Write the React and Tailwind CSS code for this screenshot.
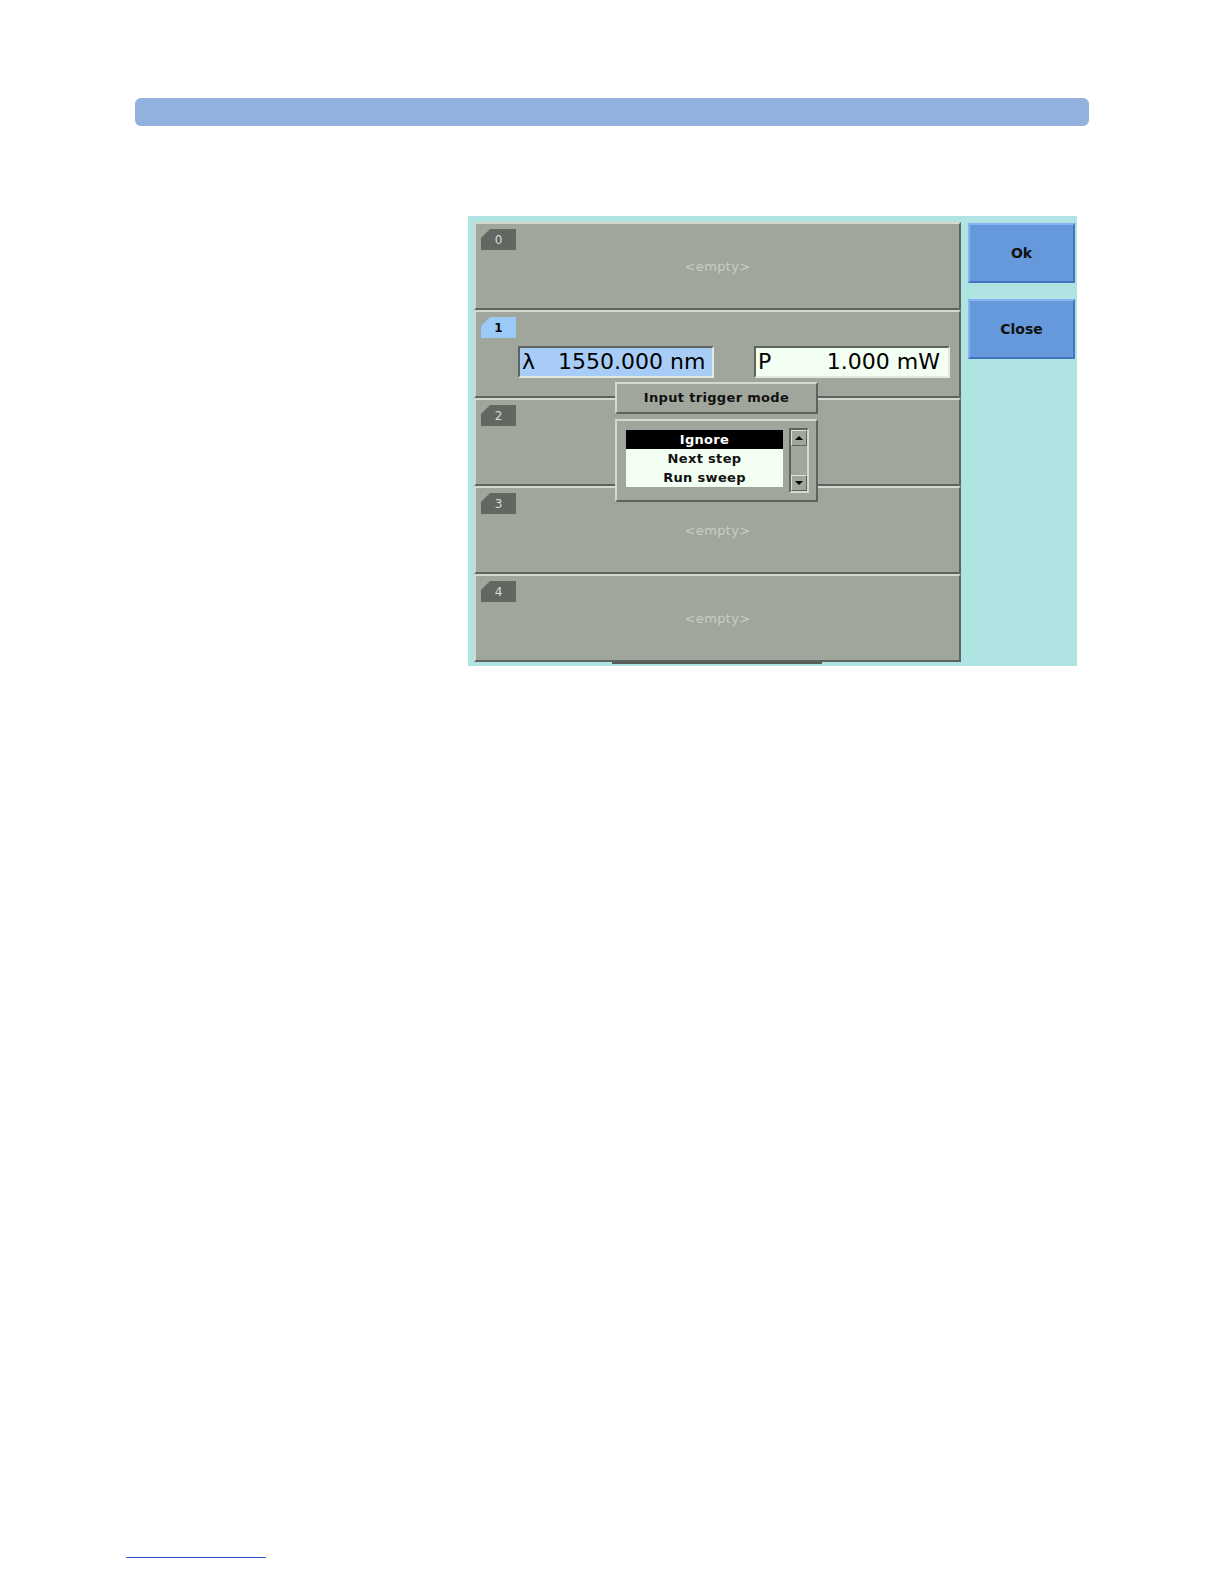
import React from "react";

const slots = [
  { id: "0", empty: true },
  { id: "1", empty: false },
  { id: "2", empty: false },
  { id: "3", empty: true },
  { id: "4", empty: true },
];

function Tab({ id, active }) {
  return (
    <div
      className={`absolute left-[5px] top-[5px] w-[35px] h-[21px] flex items-center justify-center [clip-path:polygon(9px_0,100%_0,100%_100%,0_100%,0_9px)] ${
        active ? "bg-[#9ccaf7] text-black font-bold" : "bg-[#626861] text-[#d8dcd6]"
      }`}
    >
      <span className="text-[12px] leading-none pt-[1px]">{id}</span>
    </div>
  );
}

function Slot({ slot }) {
  return (
    <div className="relative h-[88px] bg-[#a1a69d] border-t-2 border-l-2 border-t-[#d4d8d0] border-l-[#d4d8d0] border-b-2 border-r-2 border-b-[#5d635d] border-r-[#5d635d]">
      <Tab id={slot.id} active={slot.id === "1"} />
      {slot.empty && (
        <div className="pt-[33px] text-center text-[13px] text-[#c9cdc5] tracking-wide">
          &lt;empty&gt;
        </div>
      )}
      {slot.id === "1" && (
        <div className="flex gap-[40px] pl-[42px] pt-[34px]">
          <div className="w-[196px] h-[32px] bg-[#a7cdf7] border-2 border-t-[#5d635d] border-l-[#5d635d] border-b-[#e4e8e0] border-r-[#e4e8e0] flex items-center pl-[2px] text-[22px] leading-none">
            <span className="w-[36px]">λ</span>
            <span>1550.000 nm</span>
          </div>
          <div className="w-[196px] h-[32px] bg-[#f2fff2] border-2 border-t-[#5d635d] border-l-[#5d635d] border-b-[#e4e8e0] border-r-[#e4e8e0] flex items-center justify-between px-[2px] pr-[8px] text-[22px] leading-none">
            <span>P</span>
            <span>1.000 mW</span>
          </div>
        </div>
      )}
    </div>
  );
}

function Btn({ label }) {
  return (
    <div className="w-[107px] h-[60px] bg-[#6699dc] border-2 border-t-[#86b4f2] border-l-[#86b4f2] border-b-[#4474c0] border-r-[#4474c0] flex items-center justify-center text-[14px] font-bold text-[#111]">
      {label}
    </div>
  );
}

export default function App() {
  return (
    <div
      className="w-[1224px] h-[1584px] bg-white relative overflow-hidden"
      style={{ fontFamily: '"DejaVu Sans", "Liberation Sans", sans-serif' }}
    >
      <div className="pt-[98px] pl-[135px]">
        <div className="w-[954px] h-[28px] rounded-[6px] bg-[#93b1df]" />
      </div>

      <div className="mt-[90px] ml-[468px] w-[609px] h-[450px] bg-[#b0e4e2] relative flex gap-[7px] pl-[6px] pt-[6px]">
        <div className="w-[487px] flex flex-col">
          {slots.map((s) => (
            <Slot key={s.id} slot={s} />
          ))}
        </div>
        <div className="flex flex-col gap-[16px] pt-[1px]">
          <Btn label="Ok" />
          <Btn label="Close" />
        </div>

        {/* popup */}
        <div className="absolute left-[147px] top-[166px] w-[203px]">
          <div className="h-[32px] bg-[#a1a69d] border-2 border-t-[#d4d8d0] border-l-[#d4d8d0] border-b-[#5d635d] border-r-[#5d635d] flex items-center justify-center text-[13px] font-bold tracking-wide text-[#111]">
            Input trigger mode
          </div>
          <div className="mt-[5px] h-[83px] bg-[#a1a69d] border-2 border-t-[#d4d8d0] border-l-[#d4d8d0] border-b-[#5d635d] border-r-[#5d635d] flex pl-[9px] pt-[9px] gap-[6px]">
            <div className="w-[157px] h-[57px] bg-[#f2fff2] flex flex-col text-[13px] font-semibold text-[#111] tracking-wide">
              <div className="h-[19px] bg-black text-white flex items-center justify-center">Ignore</div>
              <div className="h-[19px] flex items-center justify-center">Next step</div>
              <div className="h-[19px] flex items-center justify-center">Run sweep</div>
            </div>
            <div className="-mt-[2px] w-[20px] h-[65px] border-2 border-t-[#5d635d] border-l-[#5d635d] border-b-[#d4d8d0] border-r-[#d4d8d0] flex flex-col justify-between">
              <div className="h-[16px] bg-[#a1a69d] border border-t-[#e0e4dc] border-l-[#e0e4dc] border-b-[#5d635d] border-r-[#5d635d] flex items-center justify-center">
                <div className="w-0 h-0 border-l-[4px] border-r-[4px] border-b-[4px] border-l-transparent border-r-transparent border-b-black" />
              </div>
              <div className="h-[16px] bg-[#a1a69d] border border-t-[#e0e4dc] border-l-[#e0e4dc] border-b-[#5d635d] border-r-[#5d635d] flex items-center justify-center">
                <div className="w-0 h-0 border-l-[4px] border-r-[4px] border-t-[4px] border-l-transparent border-r-transparent border-t-black" />
              </div>
            </div>
          </div>
        </div>
        <div className="absolute left-[144px] top-[446px] w-[210px] h-[2px] bg-[#565c56]" />
      </div>

      <div className="absolute left-[126px] top-[1557px] w-[140px] h-px bg-[#3355cc]" />
    </div>
  );
}
